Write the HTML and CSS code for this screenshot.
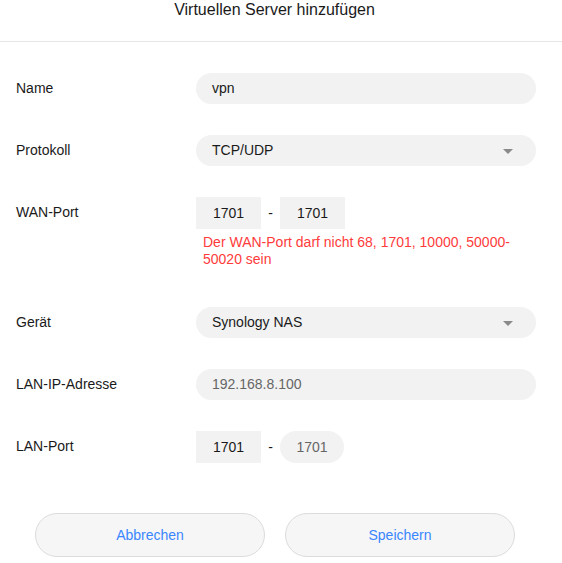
FILE: index.html
```html
<!DOCTYPE html>
<html lang="de">
<head>
<meta charset="utf-8">
<title>Virtuellen Server hinzufügen</title>
<link rel="stylesheet" href="styles.css">
</head>
<body>
<div class="dialog">
  <header class="header">Virtuellen Server hinzufügen</header>
  <form class="form">
    <div class="row">
      <div class="label">Name</div>
      <div class="field"><div class="input">vpn</div></div>
    </div>
    <div class="row">
      <div class="label">Protokoll</div>
      <div class="field"><div class="input select">TCP/UDP<span class="caret"></span></div></div>
    </div>
    <div class="row">
      <div class="label">WAN-Port</div>
      <div class="field">
        <div class="ports">
          <div class="port">1701</div>
          <span class="dash">-</span>
          <div class="port">1701</div>
        </div>
        <div class="error">Der WAN-Port darf nicht 68, 1701, 10000, 50000-50020 sein</div>
      </div>
    </div>
    <div class="row">
      <div class="label">Gerät</div>
      <div class="field"><div class="input select">Synology NAS<span class="caret"></span></div></div>
    </div>
    <div class="row">
      <div class="label">LAN-IP-Adresse</div>
      <div class="field"><div class="input disabled">192.168.8.100</div></div>
    </div>
    <div class="row">
      <div class="label">LAN-Port</div>
      <div class="field">
        <div class="ports">
          <div class="port">1701</div>
          <span class="dash">-</span>
          <div class="port pill disabled">1701</div>
        </div>
      </div>
    </div>
  </form>
  <div class="actions">
    <button class="btn" type="button">Abbrechen</button>
    <button class="btn" type="button">Speichern</button>
  </div>
</div>
</body>
</html>
```
FILE: styles.css
```css
* { box-sizing: border-box; }
html, body { margin: 0; padding: 0; background: #fff; }
body {
  font-family: "Liberation Sans", Arial, sans-serif;
  font-size: 14px;
  color: #1a1a1a;
}
.dialog { width: 562px; }
.header {
  height: 42px;
  border-bottom: 1px solid #e6e6e6;
  text-align: center;
  font-size: 16px;
  line-height: 20px;
  color: #1a1a1a;
  padding-right: 13px;
}
.form {
  display: flex;
  flex-direction: column;
  gap: 31px;
  padding-top: 31px;
}
.row {
  display: flex;
  align-items: flex-start;
}
.label {
  width: 196px;
  padding-left: 16px;
  line-height: 31px;
}
.field { width: 340px; }
.input {
  height: 31px;
  border-radius: 16px;
  background: #f2f2f2;
  padding-left: 16px;
  line-height: 31px;
  position: relative;
}
.input.disabled { color: #666; }
.select { padding-right: 40px; }
.caret {
  position: absolute;
  right: 23px;
  top: 14px;
  width: 0;
  height: 0;
  border-left: 5px solid transparent;
  border-right: 5px solid transparent;
  border-top: 5px solid #8a8a8a;
}
.ports {
  display: flex;
  align-items: center;
}
.port {
  width: 65px;
  height: 32px;
  background: #f2f2f2;
  text-align: center;
  line-height: 32px;
}
.port.pill { border-radius: 16px; width: 64px; }
.port.disabled { color: #666; }
.dash {
  width: 19px;
  text-align: center;
}
.error {
  color: #ff3b3b;
  line-height: 17px;
  margin-top: 5px;
  padding-left: 7px;
  margin-bottom: 8px;
}
.actions {
  display: flex;
  gap: 20px;
  padding-left: 35px;
  margin-top: 50px;
}
.btn {
  width: 230px;
  height: 44px;
  border: 1px solid #dcdcdc;
  border-radius: 22px;
  background: #f6f6f6;
  color: #3a86ff;
  font-family: "Liberation Sans", Arial, sans-serif;
  font-size: 14px;
  padding: 0;
}
```
